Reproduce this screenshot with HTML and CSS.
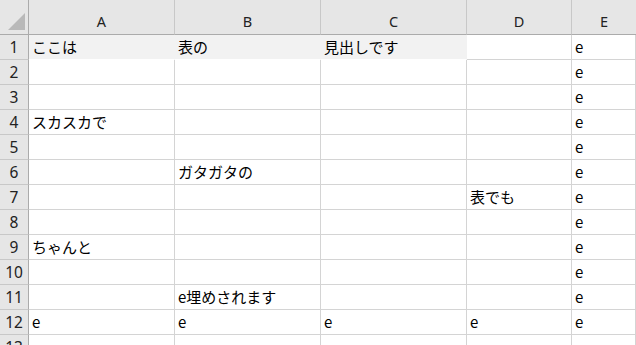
FILE: index.html
```html
<!DOCTYPE html>
<html lang="ja">
<head>
<meta charset="utf-8">
<link rel="stylesheet" href="styles.css">
</head>
<body>
<div class="sheet">
  <div class="corner"><svg width="28" height="34" viewBox="0 0 28 34"><polygon points="8,30 25,30 25,13" fill="#b9b9b9"/></svg></div>
  <div class="ch">A</div><div class="ch">B</div><div class="ch">C</div><div class="ch">D</div><div class="ch last">E</div>

  <div class="rh">1</div><div class="c f">ここは</div><div class="c f">表の</div><div class="c f">見出しです</div><div class="c"></div><div class="c">e</div>
  <div class="rh">2</div><div class="c"></div><div class="c"></div><div class="c"></div><div class="c"></div><div class="c">e</div>
  <div class="rh">3</div><div class="c"></div><div class="c"></div><div class="c"></div><div class="c"></div><div class="c">e</div>
  <div class="rh">4</div><div class="c">スカスカで</div><div class="c"></div><div class="c"></div><div class="c"></div><div class="c">e</div>
  <div class="rh">5</div><div class="c"></div><div class="c"></div><div class="c"></div><div class="c"></div><div class="c">e</div>
  <div class="rh">6</div><div class="c"></div><div class="c">ガタガタの</div><div class="c"></div><div class="c"></div><div class="c">e</div>
  <div class="rh">7</div><div class="c"></div><div class="c"></div><div class="c"></div><div class="c">表でも</div><div class="c">e</div>
  <div class="rh">8</div><div class="c"></div><div class="c"></div><div class="c"></div><div class="c"></div><div class="c">e</div>
  <div class="rh">9</div><div class="c">ちゃんと</div><div class="c"></div><div class="c"></div><div class="c"></div><div class="c">e</div>
  <div class="rh">10</div><div class="c"></div><div class="c"></div><div class="c"></div><div class="c"></div><div class="c">e</div>
  <div class="rh">11</div><div class="c"></div><div class="c">e埋めされます</div><div class="c"></div><div class="c"></div><div class="c">e</div>
  <div class="rh">12</div><div class="c">e</div><div class="c">e</div><div class="c">e</div><div class="c">e</div><div class="c">e</div>
  <div class="rh">13</div><div class="c"></div><div class="c"></div><div class="c"></div><div class="c"></div><div class="c"></div>
</div>
</body>
</html>
```
FILE: styles.css
```css
html, body {
  margin: 0;
  padding: 0;
  background: #ffffff;
  overflow: hidden;
}
.sheet {
  display: grid;
  grid-template-columns: 29px 146px 146px 146px 105px 1fr;
  grid-template-rows: 35px repeat(13, 25px);
  width: 636px;
  font-family: "Noto Sans CJK JP", "Noto Sans", sans-serif;
  color: #000;
}
.corner {
  background: #e6e6e6;
  border-right: 1px solid #ababab;
  border-bottom: 1px solid #ababab;
  box-sizing: border-box;
}
.corner svg { display: block; }
.ch {
  box-sizing: border-box;
  background: #e6e6e6;
  border-right: 1px solid #c8c8c8;
  border-bottom: 1px solid #ababab;
  display: flex;
  align-items: center;
  justify-content: center;
  padding-top: 8px;
  font-family: "Noto Sans", "Open Sans", sans-serif;
  font-size: 14.5px;
  color: #222;
}
.ch.last { border-right: none; }
.rh {
  box-sizing: border-box;
  background: #e6e6e6;
  border-right: 1px solid #ababab;
  border-bottom: 1px solid #c8c8c8;
  display: flex;
  align-items: center;
  justify-content: center;
  font-family: "Noto Sans", "Open Sans", sans-serif;
  font-size: 15.5px;
  color: #222;
}
.c {
  box-sizing: border-box;
  border-right: 1px solid #d4d4d4;
  border-bottom: 1px solid #d4d4d4;
  display: flex;
  align-items: center;
  padding: 0 0 1px 3px;
  font-size: 15px;
  line-height: 1;
  white-space: nowrap;
  overflow: visible;
}
.c.f {
  background: #f2f2f2;
  border-right-color: #f2f2f2;
  border-bottom-color: #ffffff;
}
```
